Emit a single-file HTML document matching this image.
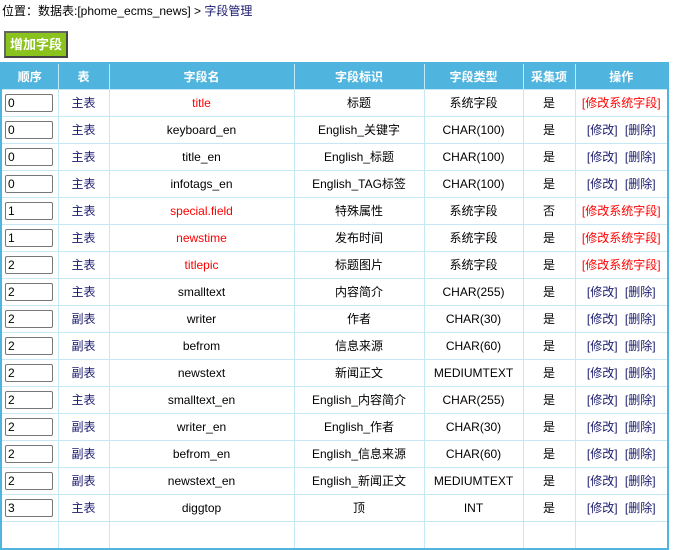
<!DOCTYPE html>
<html><head><meta charset="utf-8"><style>
body{margin:0;background:#fff;font-family:"Liberation Sans","Noto Sans CJK SC",sans-serif;font-size:12px;color:#000;overflow:hidden;height:526px}
.pos{position:absolute;left:2px;top:3px;color:#000;line-height:16px}
.pos span{color:#1a1a6e}
.btn{position:absolute;left:4px;top:31px;width:60px;height:23px;background:#8ac31e;border:2px solid #444;border-left-color:#666;border-top-color:#666;color:#fff;font-weight:bold;font-size:13px;line-height:23px;text-align:center;box-sizing:content-box;}
table{position:absolute;left:0;top:62px;border-collapse:collapse;border:2px solid #4fb4de;width:667px;table-layout:fixed}
td,th{border:1px solid #c4e8f5;height:26px;padding:0;text-align:center;font-weight:normal;line-height:16px;vertical-align:middle}
th{background:#4fb4de;color:#fff;font-weight:bold;border-color:#c4e8f5;height:25px}
input{width:44px;height:16px;border:1px solid #777;border-radius:2px;font-size:12px;padding:0 0 0 2px;margin:0 0 0 3px;display:block;font-family:inherit;line-height:16px}
td.l{text-align:left}
.n{color:#1a1a6e}
.r{color:#f00}
.a{color:#1a1a6e;word-spacing:4px}
</style></head><body>
<div class="pos">位置：数据表:[phome_ecms_news] &gt; <span>字段管理</span></div>
<div class="btn">增加字段</div>
<table>
<colgroup><col style="width:57px"><col style="width:51px"><col style="width:185px"><col style="width:130px"><col style="width:99px"><col style="width:52px"><col style="width:93px"></colgroup>
<tr><th>顺序</th><th>表</th><th>字段名</th><th>字段标识</th><th>字段类型</th><th>采集项</th><th>操作</th></tr>
<tr><td class="l"><input value="0"></td><td class="n">主表</td><td class="r">title</td><td>标题</td><td>系统字段</td><td>是</td><td class="r">[修改系统字段]</td></tr>
<tr><td class="l"><input value="0"></td><td class="n">主表</td><td>keyboard_en</td><td>English_关键字</td><td>CHAR(100)</td><td>是</td><td class="a">[修改] [删除]</td></tr>
<tr><td class="l"><input value="0"></td><td class="n">主表</td><td>title_en</td><td>English_标题</td><td>CHAR(100)</td><td>是</td><td class="a">[修改] [删除]</td></tr>
<tr><td class="l"><input value="0"></td><td class="n">主表</td><td>infotags_en</td><td>English_TAG标签</td><td>CHAR(100)</td><td>是</td><td class="a">[修改] [删除]</td></tr>
<tr><td class="l"><input value="1"></td><td class="n">主表</td><td class="r">special.field</td><td>特殊属性</td><td>系统字段</td><td>否</td><td class="r">[修改系统字段]</td></tr>
<tr><td class="l"><input value="1"></td><td class="n">主表</td><td class="r">newstime</td><td>发布时间</td><td>系统字段</td><td>是</td><td class="r">[修改系统字段]</td></tr>
<tr><td class="l"><input value="2"></td><td class="n">主表</td><td class="r">titlepic</td><td>标题图片</td><td>系统字段</td><td>是</td><td class="r">[修改系统字段]</td></tr>
<tr><td class="l"><input value="2"></td><td class="n">主表</td><td>smalltext</td><td>内容简介</td><td>CHAR(255)</td><td>是</td><td class="a">[修改] [删除]</td></tr>
<tr><td class="l"><input value="2"></td><td class="n">副表</td><td>writer</td><td>作者</td><td>CHAR(30)</td><td>是</td><td class="a">[修改] [删除]</td></tr>
<tr><td class="l"><input value="2"></td><td class="n">副表</td><td>befrom</td><td>信息来源</td><td>CHAR(60)</td><td>是</td><td class="a">[修改] [删除]</td></tr>
<tr><td class="l"><input value="2"></td><td class="n">副表</td><td>newstext</td><td>新闻正文</td><td>MEDIUMTEXT</td><td>是</td><td class="a">[修改] [删除]</td></tr>
<tr><td class="l"><input value="2"></td><td class="n">主表</td><td>smalltext_en</td><td>English_内容简介</td><td>CHAR(255)</td><td>是</td><td class="a">[修改] [删除]</td></tr>
<tr><td class="l"><input value="2"></td><td class="n">副表</td><td>writer_en</td><td>English_作者</td><td>CHAR(30)</td><td>是</td><td class="a">[修改] [删除]</td></tr>
<tr><td class="l"><input value="2"></td><td class="n">副表</td><td>befrom_en</td><td>English_信息来源</td><td>CHAR(60)</td><td>是</td><td class="a">[修改] [删除]</td></tr>
<tr><td class="l"><input value="2"></td><td class="n">副表</td><td>newstext_en</td><td>English_新闻正文</td><td>MEDIUMTEXT</td><td>是</td><td class="a">[修改] [删除]</td></tr>
<tr><td class="l"><input value="3"></td><td class="n">主表</td><td>diggtop</td><td>顶</td><td>INT</td><td>是</td><td class="a">[修改] [删除]</td></tr>
<tr><td style="height:3px"></td><td></td><td></td><td></td><td></td><td></td><td></td></tr>
</table>
</body></html>
